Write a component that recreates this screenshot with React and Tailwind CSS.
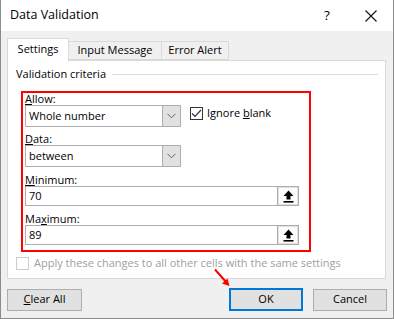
import React from "react";

const font = { fontFamily: '"Open Sans", "Noto Sans", sans-serif' };

function Chevron() {
  return (
    <svg width="9" height="6" viewBox="0 0 9 6">
      <path d="M0.5 0.8 L4.5 4.8 L8.5 0.8" fill="none" stroke="#606060" strokeWidth="1" />
    </svg>
  );
}

function UpArrow() {
  return (
    <svg width="11" height="13" viewBox="0 0 11 13">
      <path d="M5.5 0.5 L10.5 6 L7.5 6 L7.5 9.5 L3.5 9.5 L3.5 6 L0.5 6 Z" fill="#000" />
      <rect x="0.5" y="11" width="10" height="1.6" fill="#000" />
    </svg>
  );
}

function Select({ value }) {
  return (
    <div className="flex w-[156px] h-[22px] border border-[#adadad] bg-white">
      <div className="flex-1 flex items-center pl-[3px] text-[11px] text-black">{value}</div>
      <div className="w-[18px] bg-[#e1e1e1] border-l border-[#adadad] flex items-center justify-center">
        <Chevron />
      </div>
    </div>
  );
}

function RefInput({ value }) {
  return (
    <div className="flex w-[274px] h-[20px] border border-[#adadad] bg-white">
      <div className="flex-1 flex items-center pl-[3px] text-[11px] text-black">{value}</div>
      <div className="w-[21px] bg-[#e1e1e1] border-l border-[#adadad] p-[1px]">
        <div className="w-full h-full bg-[#fdfdfd] flex items-center justify-center">
          <UpArrow />
        </div>
      </div>
    </div>
  );
}

export default function App() {
  return (
    <div
      className="relative w-[394px] h-[319px] bg-[#f0f0f0] border-x border-b border-[#8c8c8c] flex flex-col overflow-hidden"
      style={font}
    >
      {/* title bar */}
      <div className="h-[31px] bg-white flex items-center pl-[9px] text-[12.5px] text-black shrink-0">
        <span>Data Validation</span>
        <span className="ml-auto w-[14px] text-[13.5px]">?</span>
        <span className="ml-[27px] mr-[16px]">
          <svg width="12" height="12" viewBox="0 0 12 12">
            <path d="M0.5 0.5 L11.5 11.5 M11.5 0.5 L0.5 11.5" stroke="#111" strokeWidth="1.1" />
          </svg>
        </span>
      </div>

      <div className="px-[6px] pt-[7px] flex flex-col">
        {/* tabs */}
        <div className="flex items-end h-[22px] text-[11px] text-black">
          <div className="relative z-10 -mb-px w-[62px] h-[23px] bg-white border border-b-0 border-[#d9d9d9] flex items-center justify-center pb-[2px]">
            Settings
          </div>
          <div className="w-[93px] h-[19px] bg-[#f0f0f0] border border-l-0 border-[#d9d9d9] flex items-center justify-center">
            Input Message
          </div>
          <div className="w-[67px] h-[19px] bg-[#f0f0f0] border border-l-0 border-[#d9d9d9] flex items-center justify-center">
            Error Alert
          </div>
        </div>

        {/* panel */}
        <div className="w-[379px] h-[219px] bg-white border border-[#d9d9d9] flex flex-col text-[11px] text-black">
          <div className="flex items-center pl-[8px] pr-[7px] pt-[5px] h-[22px]">
            <span>Validation criteria</span>
            <div className="flex-1 h-px bg-[#dcdcdc] ml-[6px]" />
          </div>

          <div className="ml-[13px] mt-[8px] w-[290px] h-[161px] border-2 border-[#ff0000] px-[2px] flex flex-col">
            <div className="leading-[13px] -mt-[1px]">
              <u>A</u>llow:
            </div>
            <div className="flex items-center mt-[0px]">
              <Select value="Whole number" />
              <div className="ml-[9px] flex items-center -mt-[5px]">
                <div className="w-[13px] h-[13px] border border-[#333] flex items-center justify-center">
                  <svg width="11" height="9" viewBox="0 0 11 9">
                    <path d="M1 4.5 L4 7.5 L10 1" fill="none" stroke="#333" strokeWidth="1.2" />
                  </svg>
                </div>
                <span className="ml-[4px]">
                  Ignore <u>b</u>lank
                </span>
              </div>
            </div>
            <div className="leading-[13px] mt-[5px]">
              <u>D</u>ata:
            </div>
            <div className="mt-[0px]">
              <Select value="between" />
            </div>
            <div className="leading-[13px] mt-[6px]">
              <u>M</u>inimum:
            </div>
            <div className="mt-[0px]">
              <RefInput value="70" />
            </div>
            <div className="leading-[13px] mt-[6px]">
              Ma<u>x</u>imum:
            </div>
            <div className="mt-[0px]">
              <RefInput value="89" />
            </div>
          </div>

          <div className="flex items-center pl-[8px] mt-[3px]">
            <div className="w-[13px] h-[13px] border border-[#cccccc]" />
            <span className="ml-[5px] text-[#a0a0a0]">
              Apply these changes to all other cells with the same settings
            </span>
          </div>
        </div>

        {/* buttons */}
        <div className="flex items-center mt-[9px] text-[11px] text-black">
          <div className="w-[75px] h-[22px] bg-[#e1e1e1] border border-[#adadad] flex items-center justify-center">
            <span>
              <u>C</u>lear All
            </span>
          </div>
          <div className="ml-auto w-[74px] h-[23px] bg-[#e1e1e1] border-2 border-[#0078d7] flex items-center justify-center">
            OK
          </div>
          <div className="ml-[10px] w-[74px] h-[22px] bg-[#e1e1e1] border border-[#adadad] flex items-center justify-center">
            Cancel
          </div>
        </div>
      </div>

      {/* red arrow pointing at OK */}
      <svg className="absolute left-[212px] top-[268px]" width="18" height="20" viewBox="0 0 18 20">
        <path d="M2 1.5 L14 15" stroke="#ff0000" strokeWidth="2" />
        <path d="M16.5 18 L9 15.5 L14.5 10.5 Z" fill="#ff0000" />
      </svg>
    </div>
  );
}
